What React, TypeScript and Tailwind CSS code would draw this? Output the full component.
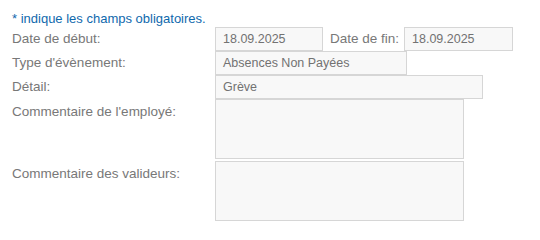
import React from 'react';

const font = { fontFamily: '"Liberation Sans", Arial, sans-serif' };

const Field = ({ value, width }: { value?: string; width: string }) => (
  <div
    className={`${width} h-[24px] border border-[#d6d6d6] bg-[#f8f8f8] px-[7px] text-[12.5px] leading-[22px] text-[#727272]`}
  >
    {value}
  </div>
);

const App = () => {
  return (
    <div className="w-[540px] h-[240px] bg-white pt-[11px]" style={font}>
      <p className="pl-[12px] text-[13px] leading-[15px] text-[#0f69ad]">* indique les champs obligatoires.</p>

      <div className="mt-[1px] flex flex-col">
        {/* Dates */}
        <div className="flex items-center h-[24px]">
          <label className="w-[215px] pl-[12px] text-[13.5px] text-[#787878]">Date de début:</label>
          <Field value="18.09.2025" width="w-[108px]" />
          <span className="ml-[7px] w-[74px] text-[13.5px] text-[#787878]">Date de fin:</span>
          <Field value="18.09.2025" width="w-[109px]" />
        </div>

        <div className="flex items-center h-[24px]">
          <label className="w-[215px] pl-[12px] text-[13.5px] text-[#787878]">Type d'évènement:</label>
          <Field value="Absences Non Payées" width="w-[192px]" />
        </div>

        <div className="flex items-center h-[24px]">
          <label className="w-[215px] pl-[12px] text-[13.5px] text-[#787878]">Détail:</label>
          <Field value="Grève" width="w-[268px]" />
        </div>

        {/* Comments */}
        <div className="flex">
          <label className="w-[215px] pl-[12px] pt-[3px] text-[13.5px] text-[#787878]">Commentaire de l'employé:</label>
          <div className="w-[249px] h-[60px] border border-[#d6d6d6] bg-[#f8f8f8]" />
        </div>

        <div className="flex mt-[2px]">
          <label className="w-[215px] pl-[12px] pt-[3px] text-[13.5px] text-[#787878]">Commentaire des valideurs:</label>
          <div className="w-[249px] h-[60px] border border-[#d6d6d6] bg-[#f8f8f8]" />
        </div>
      </div>
    </div>
  );
};

export default App;
